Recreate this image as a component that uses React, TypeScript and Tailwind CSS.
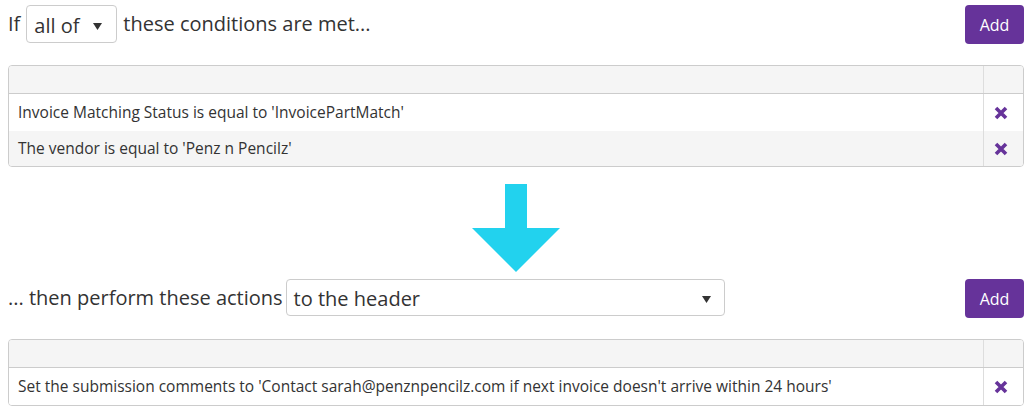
import React from "react";

const font = { fontFamily: '"Open Sans", "Liberation Sans", sans-serif' };

function XIcon() {
  return (
    <svg width="14" height="14" viewBox="0 0 14 14" aria-hidden="true">
      <path d="M2 2 L12 12 M12 2 L2 12" stroke="#66339a" strokeWidth="3.6" strokeLinecap="butt" />
    </svg>
  );
}

function Caret() {
  return (
    <svg width="9" height="7" viewBox="0 0 9 7" aria-hidden="true">
      <path d="M0 0 H9 L4.5 7 Z" fill="#333" />
    </svg>
  );
}

function RuleTable({ rows }: { rows: string[] }) {
  return (
    <div className="border border-[#cccccc] rounded-[4px] overflow-hidden text-[15.5px] text-[#333333]">
      <div className="flex h-[28px] bg-[#f5f5f5] border-b border-[#cccccc]">
        <div className="flex-1" />
        <div className="w-[40px] border-l border-[#dddddd]" />
      </div>
      {rows.map((r, i) => (
        <div
          key={i}
          className={`flex ${i % 2 === 1 ? "bg-[#f5f5f5]" : "bg-white"} ${i > 0 ? "h-[35px]" : "h-[37px]"}`}
        >
          <div className="flex-1 flex items-center pl-[9px]">{r}</div>
          <div className="w-[40px] border-l border-[#dddddd] flex items-center justify-center pr-[5px]">
            <XIcon />
          </div>
        </div>
      ))}
    </div>
  );
}

function AddButton() {
  return (
    <button className="w-[59px] h-[39px] rounded-[4px] bg-[#66339a] text-white text-[16px] flex items-center justify-center">
      Add
    </button>
  );
}

export default function App() {
  return (
    <div className="w-[1027px] h-[409px] bg-white text-[#333333] pl-[8px] pr-[3px] overflow-hidden" style={font}>
      {/* Top row */}
      <div className="flex items-start justify-between pt-[5px] h-[65px]">
        <div className="flex items-center h-[38px] text-[20px]">
          <span className="mr-[6px]">If</span>
          <div className="flex items-center w-[91px] h-[38px] border border-[#cccccc] rounded-[4px] pl-[7px] pr-[14px] justify-between">
            <span className="pt-[3px]">all of</span>
            <span className="pt-[4px]"><Caret /></span>
          </div>
          <span className="ml-[6px]">these conditions are met...</span>
        </div>
        <AddButton />
      </div>

      <RuleTable
        rows={[
          "Invoice Matching Status is equal to 'InvoicePartMatch'",
          "The vendor is equal to 'Penz n Pencilz'",
        ]}
      />

      {/* Arrow */}
      <div className="h-[112px] flex items-start pl-[464px] pt-[17px]">
        <svg width="88" height="88" viewBox="0 0 88 88" aria-hidden="true">
          <rect x="33" y="0" width="22" height="45" fill="#22d2ee" />
          <path d="M0 44 H88 L44 88 Z" fill="#22d2ee" />
        </svg>
      </div>

      {/* Bottom row */}
      <div className="flex items-start justify-between h-[60px]">
        <div className="flex items-start">
          <span className="text-[20px] mt-[4px] mr-[3px]">... then perform these actions</span>
          <div className="flex items-center justify-between w-[439px] h-[37px] border border-[#cccccc] rounded-[4px] pl-[7px] pr-[13px] text-[20px]">
            <span className="pt-[2px]">to the header</span>
            <span className="pt-[3px]"><Caret /></span>
          </div>
        </div>
        <AddButton />
      </div>

      <RuleTable
        rows={[
          "Set the submission comments to 'Contact sarah@penznpencilz.com if next invoice doesn't arrive within 24 hours'",
        ]}
      />
    </div>
  );
}
